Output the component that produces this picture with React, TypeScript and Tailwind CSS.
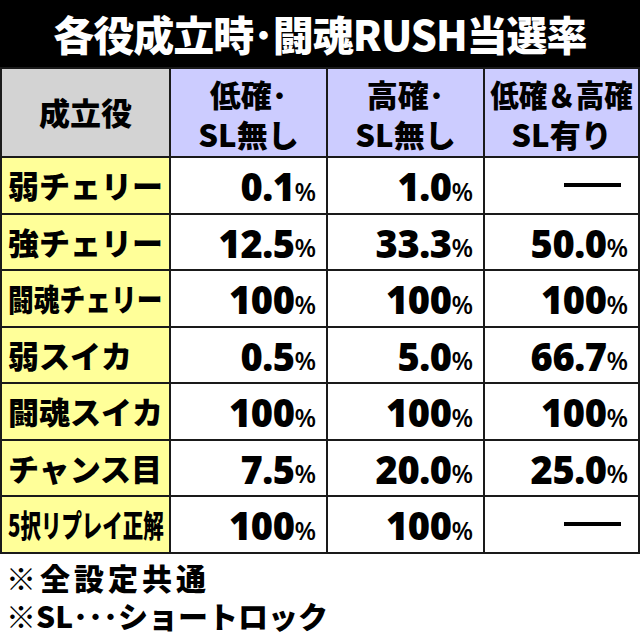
const jp = "font-['Noto_Sans_CJK_JP',sans-serif]"
const num = "font-['Open_Sans','Noto_Sans_CJK_JP',sans-serif]"

type Row = { name: string; squeeze?: string; values: (string | null)[] }

const rows: Row[] = [
  { name: "弱チェリー", values: ["0.1", "1.0", null] },
  { name: "強チェリー", values: ["12.5", "33.3", "50.0"] },
  { name: "闘魂チェリー", squeeze: "scale-x-[0.83]", values: ["100", "100", "100"] },
  { name: "弱スイカ", values: ["0.5", "5.0", "66.7"] },
  { name: "闘魂スイカ", values: ["100", "100", "100"] },
  { name: "チャンス目", values: ["7.5", "20.0", "25.0"] },
  { name: "5択リプレイ正解", squeeze: "scale-x-[0.66]", values: ["100", "100", null] },
]

function Value({ v }: { v: string | null }) {
  if (v === null) {
    return (
      <div className="flex h-full items-center justify-end bg-white pr-[17px]">
        <div className="h-[4px] w-[57px] bg-black" />
      </div>
    )
  }
  return (
    <div className={`flex h-full items-center justify-end bg-white pr-[10px] pt-[2px] ${num}`}>
      <span className="text-[38px] font-extrabold leading-none tracking-[-0.5px]">{v}</span>
      <span className="mt-[10px] text-[25px] font-semibold leading-none">%</span>
    </div>
  )
}

function HeadCell({ top, bottom, tight }: { top: string; bottom: string; tight?: boolean }) {
  return (
    <div className="flex h-full flex-col items-center justify-center bg-[#ccccff] pt-[2px] text-[31px] font-black leading-[40px]">
      <span className={tight ? "scale-x-[0.92] whitespace-nowrap" : "whitespace-nowrap"}>{top}</span>
      <span className="whitespace-nowrap">{bottom}</span>
    </div>
  )
}

export default function App() {
  return (
    <div className={`w-[640px] bg-white text-black ${jp}`}>
      <div className="flex h-[67px] items-center justify-center bg-black text-[41px] font-black tracking-[-1px] text-white">
        各役成立時･闘魂RUSH当選率
      </div>

      <div className="grid grid-cols-[167px_155px_155px_153px] gap-[2px] bg-[#1a1a1a] p-[2px]">
        <div className="flex h-[87px] items-center justify-center bg-[#d3d3d3] text-[31px] font-black">
          成立役
        </div>
        <HeadCell top="低確･" bottom="SL無し" />
        <HeadCell top="高確･" bottom="SL無し" />
        <HeadCell top="低確＆高確" bottom="SL有り" tight />

        {rows.map((r) => (
          <div key={r.name} className="contents">
            <div className="flex h-[54.5px] items-center overflow-hidden bg-[#ffff99] pl-[6px] text-[31px] font-black">
              <span className={`origin-left whitespace-nowrap ${r.squeeze ?? ""}`}>{r.name}</span>
            </div>
            {r.values.map((v, i) => (
              <Value key={i} v={v} />
            ))}
          </div>
        ))}
      </div>

      <div className="pt-[4px] pl-[6px] text-[30px] font-black leading-[38px]">
        <div className="tracking-[4px]">※全設定共通</div>
        <div>※SL･･･ショートロック</div>
      </div>
    </div>
  )
}
